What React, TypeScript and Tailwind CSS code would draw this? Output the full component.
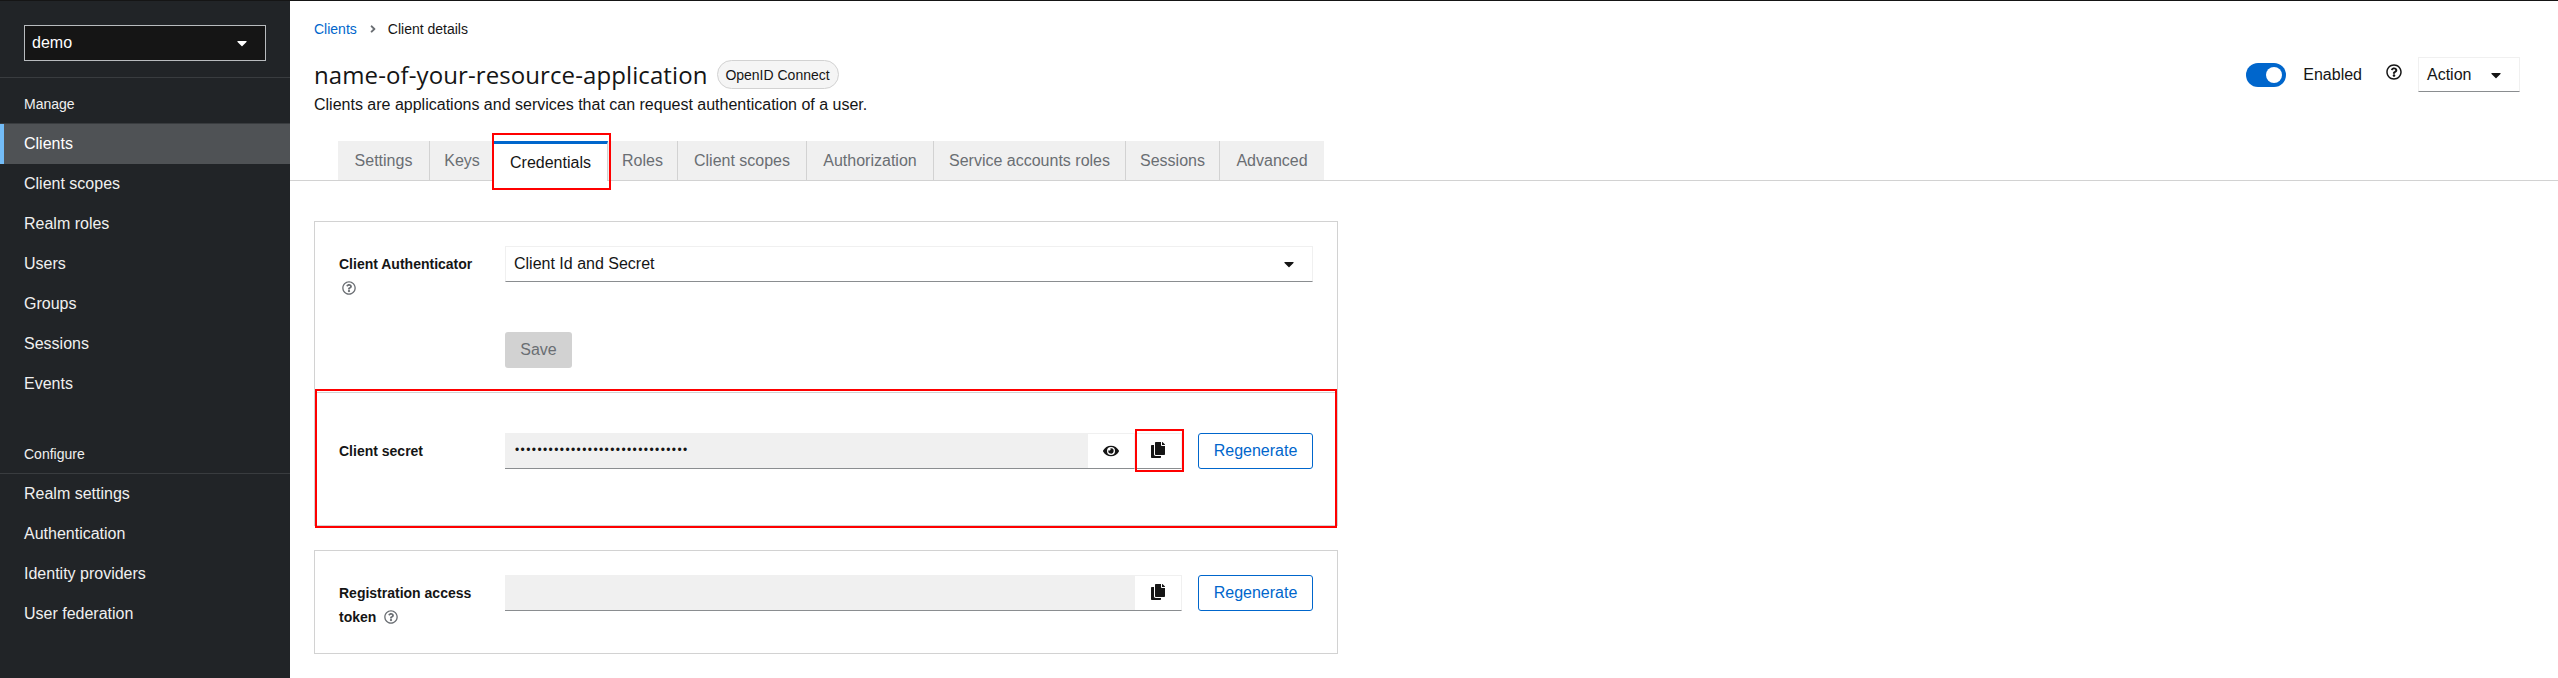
import { FaCaretDown, FaCopy, FaEye, FaRegQuestionCircle, FaAngleRight } from "react-icons/fa";

const font = { fontFamily: '"Liberation Sans", Arial, sans-serif' };

const manage = ["Clients", "Client scopes", "Realm roles", "Users", "Groups", "Sessions", "Events"];
const configure = ["Realm settings", "Authentication", "Identity providers", "User federation"];
const tabs: [string, string][] = [
  ["Settings", "w-[92px]"],
  ["Keys", "w-[64px]"],
  ["Credentials", "w-[114px]"],
  ["Roles", "w-[70px]"],
  ["Client scopes", "w-[129px]"],
  ["Authorization", "w-[127px]"],
  ["Service accounts roles", "w-[192px]"],
  ["Sessions", "w-[94px]"],
  ["Advanced", "w-[104px]"],
];

function NavItem({ label, active }: { label: string; active?: boolean }) {
  return (
    <div
      className={
        active
          ? "h-10 flex items-center pl-5 border-l-4 border-[#73bcf7] bg-[#4f5255] text-white text-base"
          : "h-10 flex items-center pl-6 text-[#f0f0f0] text-base"
      }
    >
      {label}
    </div>
  );
}

function Sidebar() {
  return (
    <aside className="w-[290px] shrink-0 h-[677px] bg-[#212427] flex flex-col">
      <div className="pt-6 px-6 pb-4 border-b border-[#393c3f]">
        <div className="h-9 bg-[#151515] border border-[#b8bbbe] flex items-center justify-between pl-[7px] pr-[15px] text-white text-base">
          <span>demo</span>
          <FaCaretDown className="w-4 h-4" />
        </div>
      </div>
      <div className="h-[46px] pt-[14px] pl-6 text-sm leading-6 text-[#f0f0f0] border-b border-[#393c3f]">Manage</div>
      {manage.map((m) => (
        <NavItem key={m} label={m} active={m === "Clients"} />
      ))}
      <div className="h-[70px] pt-[38px] pl-6 text-sm leading-6 text-[#f0f0f0] border-b border-[#393c3f]">Configure</div>
      {configure.map((m) => (
        <NavItem key={m} label={m} />
      ))}
    </aside>
  );
}

function Header() {
  return (
    <header className="h-[180px] border-b border-[#d2d2d2] flex flex-col pl-6">
      <div className="pt-[18px] h-[38px] flex items-center text-sm leading-5 text-[#151515]">
        <span className="text-[#06c]">Clients</span>
        <FaAngleRight className="w-[12px] h-[12px] ml-[10px] mr-[9px] text-[#6a6e73]" />
        <span>Client details</span>
      </div>
      <div className="mt-[18px] h-[35px] flex items-center justify-between pr-[38px]">
        <div className="flex items-center">
          <span className="text-2xl tracking-[0.1px] text-[#151515]" style={{ fontFamily: '"Open Sans", sans-serif' }}>
            name-of-your-resource-application
          </span>
          <span className="ml-[9px] h-[29px] w-[122px] flex items-center justify-center rounded-full border border-[#d2d2d2] bg-[#f5f5f5] text-sm text-[#151515]">
            OpenID Connect
          </span>
        </div>
        <div className="flex items-center">
          <span className="relative w-10 h-6 rounded-full bg-[#06c] flex items-center justify-end pr-[4px]">
            <span className="w-4 h-4 rounded-full bg-white" />
          </span>
          <span className="ml-[17px] text-base text-[#151515]">Enabled</span>
          <FaRegQuestionCircle className="ml-6 mb-[6px] w-4 h-4 text-[#151515]" />
          <div className="ml-4 w-[102px] h-[35px] border border-[#f0f0f0] border-b-[#8a8d90] flex items-center justify-between pl-2 pr-[15px] text-base text-[#151515]">
            <span>Action</span>
            <FaCaretDown className="w-4 h-4" />
          </div>
        </div>
      </div>
      <div className="mt-px h-6 text-base leading-6 text-[#151515]">
        Clients are applications and services that can request authentication of a user.
      </div>
      <div className="mt-auto pl-6 flex h-[39px]">
        {tabs.map(([t, w], i) =>
          t === "Credentials" ? (
            <div
              key={t}
              className={`relative ${w} h-[40px] bg-white border-t-[3px] border-r border-t-[#06c] border-r-[#d2d2d2] flex items-center justify-center text-base text-[#151515]`}
            >
              {t}
              <span className="absolute left-[-2px] right-[-4px] top-[-11px] bottom-[-9px] border-2 border-[#ff0000]" />
            </div>
          ) : (
            <div
              key={t}
              className={`${w} bg-[#f0f0f0] flex items-center justify-center text-base text-[#6a6e73] ${
                i < tabs.length - 1 && tabs[i + 1][0] !== "Credentials" ? "border-r border-[#d2d2d2]" : ""
              }`}
            >
              {t}
            </div>
          )
        )}
      </div>
    </header>
  );
}

function CopyBtn({ red }: { red?: boolean }) {
  return (
    <div className="relative w-[47px] h-9 border-t border-r border-b border-[#f0f0f0] border-b-[#8a8d90] flex items-center justify-center text-[#151515]">
      <FaCopy className="w-4 h-4 mb-[2px]" />
      {red && <span className="absolute left-0 right-[-3px] top-[-5px] bottom-[-4px] border-2 border-[#ff0000]" />}
    </div>
  );
}

function Regenerate() {
  return (
    <button className="ml-4 w-[115px] h-9 rounded-[3px] border border-[#06c] text-[#06c] text-base flex items-center justify-center">
      Regenerate
    </button>
  );
}

function Cards() {
  return (
    <div className="pt-10 pl-6 w-[1048px]">
      <section className="h-[171px] border border-b-0 border-[#d2d2d2] px-6 pt-6 grid grid-cols-[166px_1fr] content-start">
        <div className="pt-[6px] text-sm leading-6 font-bold text-[#151515]">
          <div>Client Authenticator</div>
          <FaRegQuestionCircle className="mt-[5px] ml-[3px] w-[14px] h-[14px] text-[#6a6e73]" />
        </div>
        <div>
          <div className="h-9 border border-[#f0f0f0] border-b-[#8a8d90] flex items-center justify-between pl-2 pr-[15px] text-base text-[#151515]">
            <span>Client Id and Secret</span>
            <FaCaretDown className="w-4 h-4" />
          </div>
          <button className="mt-[50px] w-[67px] h-9 rounded-[3px] bg-[#d2d2d2] text-[#6a6e73] text-base">Save</button>
        </div>
      </section>
      <section className="relative h-[134px] border border-[#d2d2d2] px-6 pt-10 grid grid-cols-[166px_1fr] content-start">
        <span className="absolute left-0 top-[-4px] right-0 bottom-[-3px] border-2 border-[#ff0000]" />
        <div className="pt-[6px] text-sm leading-6 font-bold text-[#151515]">Client secret</div>
        <div className="flex">
          <div className="w-[583px] h-9 bg-[#f0f0f0] border-b border-[#8a8d90] flex items-center pl-[10px] pb-[2px] text-[12px] tracking-[1.4px] text-[#151515]">
            •••••••••••••••••••••••••••••••
          </div>
          <div className="w-[47px] h-9 border-t border-r border-b border-[#f0f0f0] border-b-[#8a8d90] flex items-center justify-center text-[#151515]">
            <FaEye className="w-4 h-4" />
          </div>
          <CopyBtn red />
          <Regenerate />
        </div>
      </section>
      <section className="mt-6 h-[104px] border border-[#d2d2d2] px-6 pt-6 grid grid-cols-[166px_1fr] content-start">
        <div className="pt-[6px] text-sm leading-6 font-bold text-[#151515]">
          <div>Registration access</div>
          <div className="flex items-center">
            token
            <FaRegQuestionCircle className="ml-[8px] w-[14px] h-[14px] text-[#6a6e73]" />
          </div>
        </div>
        <div className="flex">
          <div className="w-[630px] h-9 bg-[#f0f0f0] border-b border-[#8a8d90]" />
          <CopyBtn />
          <Regenerate />
        </div>
      </section>
    </div>
  );
}

export default function App() {
  return (
    <div style={font} className="h-[678px] w-[2558px] overflow-hidden border-t border-[#151515] flex bg-white">
      <Sidebar />
      <main className="flex-1 min-w-0">
        <Header />
        <Cards />
      </main>
    </div>
  );
}
